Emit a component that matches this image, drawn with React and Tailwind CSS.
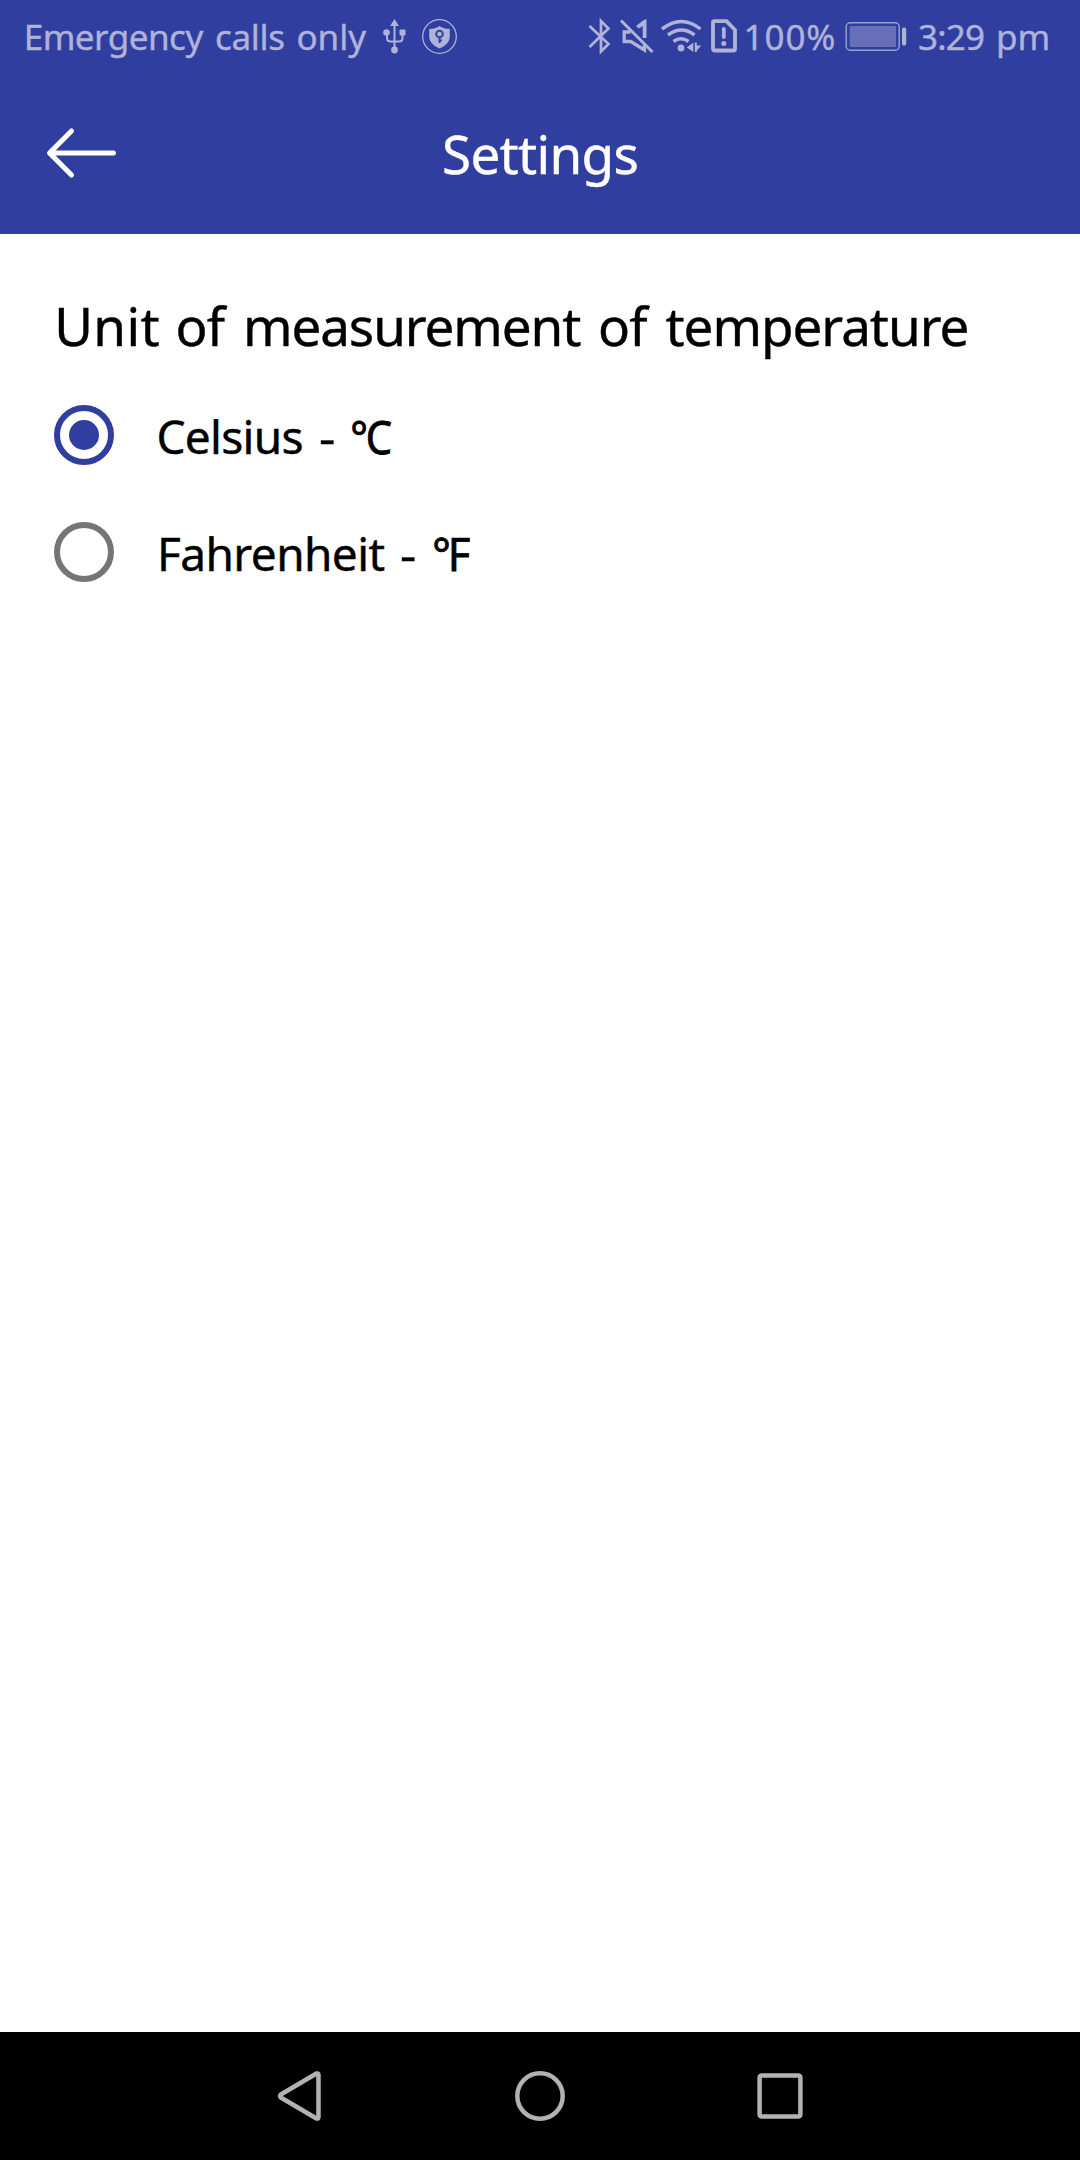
const ink = '#afb2d9';

function UsbAndShield() {
  return (
    <svg className="ml-[13.5px] h-[72px] w-[80px] shrink-0" viewBox="380 0 80 72" fill="none" stroke={ink} strokeWidth="2">
      <path d="M394.5 23v27M387 34v4q0 3.500 3.500 3.500h8.500q3.500 0 3.500-3.500v-4" />
      <path d="M394.500 19l4.500 7h-9z" fill={ink} stroke="none" />
      <circle cx="386.500" cy="32.500" r="3.300" fill={ink} stroke="none" />
      <rect x="399.500" y="29.500" width="6" height="6" rx="1" fill={ink} stroke="none" />
      <circle cx="394.500" cy="50" r="3.400" fill={ink} stroke="none" />
      <circle cx="439.500" cy="36.500" r="16.800" strokeWidth="1.300" />
      <path d="M439.500 26q4 3 10.300 3v8q0 7-10.300 11.500Q429.200 44 429.200 37v-8q6.300 0 10.300-3z" fill={ink} stroke="none" />
      <g stroke="#394499">
        <circle cx="439.500" cy="34" r="3.300" />
        <path d="M439.500 37v6M439.500 40.500h2.500" />
      </g>
    </svg>
  );
}

function StatusIcons() {
  return (
    <svg className="h-[72px] w-[163px] shrink-0" viewBox="580 0 163 72" fill="none" stroke={ink} strokeWidth="2.700">
      <path d="M589.500 26l19 18-7.500 7.500V21l7.500 7.500-19 18.500" />
      <path d="M621 20.500l31.500 31.500" strokeWidth="3" />
      <path d="M636 26l8.500-6.500h2v18.500h-3.800V26l-4 2.500z" fill={ink} stroke="none" />
      <path d="M630.500 32h-6.300v9.500h6.500L644.500 50v-6" strokeWidth="3.300" />
      <g strokeWidth="3.500">
        <path d="M662 29q19.500-15 38.500 0" />
        <path d="M668 35q13.500-10 26.500 0" />
        <path d="M673.500 41.500q7.500-5.500 15 0" />
      </g>
      <circle cx="681" cy="48" r="3.400" fill={ink} stroke="none" />
      <path d="M693.300 42.500v9.500l-6.500-4.500zM694.800 42.500h2v3h4.500l-4.500 5v1.500h-2z" fill={ink} stroke="none" />
      <path d="M714 21.200h12.500l8.500 8.800v19q0 1.500-1.500 1.500h-18.500q-2 0-2-2v-26q0-1.300 1-1.300z" strokeWidth="3.800" />
      <path d="M723.800 29v8" strokeWidth="3.800" strokeLinecap="round" />
      <circle cx="723.800" cy="43.500" r="2.500" fill={ink} stroke="none" />
    </svg>
  );
}

function Battery() {
  return (
    <svg className="ml-[7.700px] h-[72px] w-[65px] shrink-0" viewBox="844 0 65 72" fill="none">
      <rect x="846.200" y="22.700" width="53" height="27.500" rx="4" stroke={ink} strokeWidth="1.400" strokeOpacity=".85" />
      <rect x="849.700" y="26" width="46.300" height="21" rx="1" fill="#676fb6" />
      <rect x="902" y="27.500" width="4.200" height="18" rx="1.800" fill={ink} />
    </svg>
  );
}

function Radio({ checked }) {
  return (
    <span
      className={
        checked
          ? 'flex size-[60px] shrink-0 items-center justify-center rounded-full border-[6px] border-[#303e9f]'
          : 'flex size-[60px] shrink-0 items-center justify-center rounded-full border-[6px] border-[#757575]'
      }
    >
      {checked && <span className="size-[30px] rounded-full bg-[#303e9f]" />}
    </span>
  );
}

export default function App() {
  return (
    <div className="flex h-[2160px] w-[1080px] flex-col overflow-hidden bg-white font-['Noto_Sans',sans-serif] whitespace-pre text-black [-webkit-text-stroke:0.4px]">
      <header className="h-[234px] bg-[#303e9f]">
        <div className="flex h-[72px] items-center pl-[23.700px] text-[35px] leading-[72px] text-[#afb2d9]">
          <span className="translate-y-px tracking-[-0.500px]">Emergency</span>
          <span className="ml-[12.200px] translate-y-px tracking-[-0.300px]">calls</span>
          <span className="ml-[11.700px] translate-y-px">only</span>
          <UsbAndShield />
          <div className="mr-[29.700px] ml-auto flex items-center">
            <StatusIcons />
            <span className="ml-[1px] translate-y-px tracking-[0.900px]">100%</span>
            <Battery />
            <span className="ml-[9px] translate-y-px tracking-[-0.800px]">3:29</span>
            <span className="ml-[11.800px] translate-y-px">pm</span>
          </div>
        </div>
        <div className="flex h-[162px] items-center">
          <svg className="ml-[44px] h-[56px] w-[76px]" viewBox="44 125 76 56" fill="none" stroke="#fff" strokeWidth="5" strokeLinecap="round" strokeLinejoin="round">
            <path d="M71.500 131l-22 22 22 22M50 153h63.500" />
          </svg>
          <h1 className="ml-[322px] translate-y-px text-[53px] leading-[72px] tracking-[-0.700px] text-white">Settings</h1>
        </div>
      </header>

      <main className="flex-1 pt-[56px]">
        <h2 className="flex h-[72px] pl-[54.200px] text-[53px] leading-[72px]">
          <span className="tracking-[0.400px]">Unit</span>
          <span className="ml-[15.400px] tracking-[-0.800px]">of</span>
          <span className="ml-[18.800px] tracking-[-1.100px]">measurement</span>
          <span className="ml-[17.700px] tracking-[-0.800px]">of</span>
          <span className="ml-[18.800px] tracking-[-1.030px]">temperature</span>
        </h2>
        <div className="mt-[14.500px] flex h-[117px] items-center pl-[54px] text-[46px] leading-[60px]">
          <Radio checked />
          <span className="ml-[42.500px] translate-y-px tracking-[-0.700px]">Celsius</span>
          <span className="ml-[15.700px] origin-left translate-y-px scale-x-[1.100]">-</span>
          <span className="ml-[16.700px] origin-left translate-y-px scale-x-[0.910] [-webkit-text-stroke:0.800px]">℃</span>
        </div>
        <div className="flex h-[117px] items-center pl-[54px] text-[46px] leading-[60px]">
          <Radio />
          <span className="ml-[43px] translate-y-px tracking-[-0.600px]">Fahrenheit</span>
          <span className="ml-[15.700px] origin-left translate-y-px scale-x-[1.100]">-</span>
          <span className="ml-[16.700px] origin-left translate-y-px scale-x-[0.950] [-webkit-text-stroke:0.800px]">℉</span>
        </div>
      </main>

      <nav className="flex h-[128px] items-center bg-black pl-[270px]">
        <svg className="h-[60px] w-[60px]" viewBox="270 2066 60 60" fill="none" stroke="#b2b2b2" strokeWidth="4.500" strokeLinejoin="round">
          <path d="M280.800 2094.500q-1.300 1.500 0 3l35.700 21q2 .5 2-1.500v-42q0-2-2-1.500z" />
        </svg>
        <svg className="ml-[180px] h-[60px] w-[60px]" viewBox="510 2066 60 60" fill="none" stroke="#b2b2b2" strokeWidth="4.500">
          <circle cx="540" cy="2096" r="22.700" />
        </svg>
        <svg className="ml-[180px] h-[60px] w-[60px]" viewBox="750 2066 60 60" fill="none" stroke="#b2b2b2" strokeWidth="4.500">
          <rect x="759.600" y="2075.600" width="40.800" height="40.800" rx="2" />
        </svg>
      </nav>
    </div>
  );
}
